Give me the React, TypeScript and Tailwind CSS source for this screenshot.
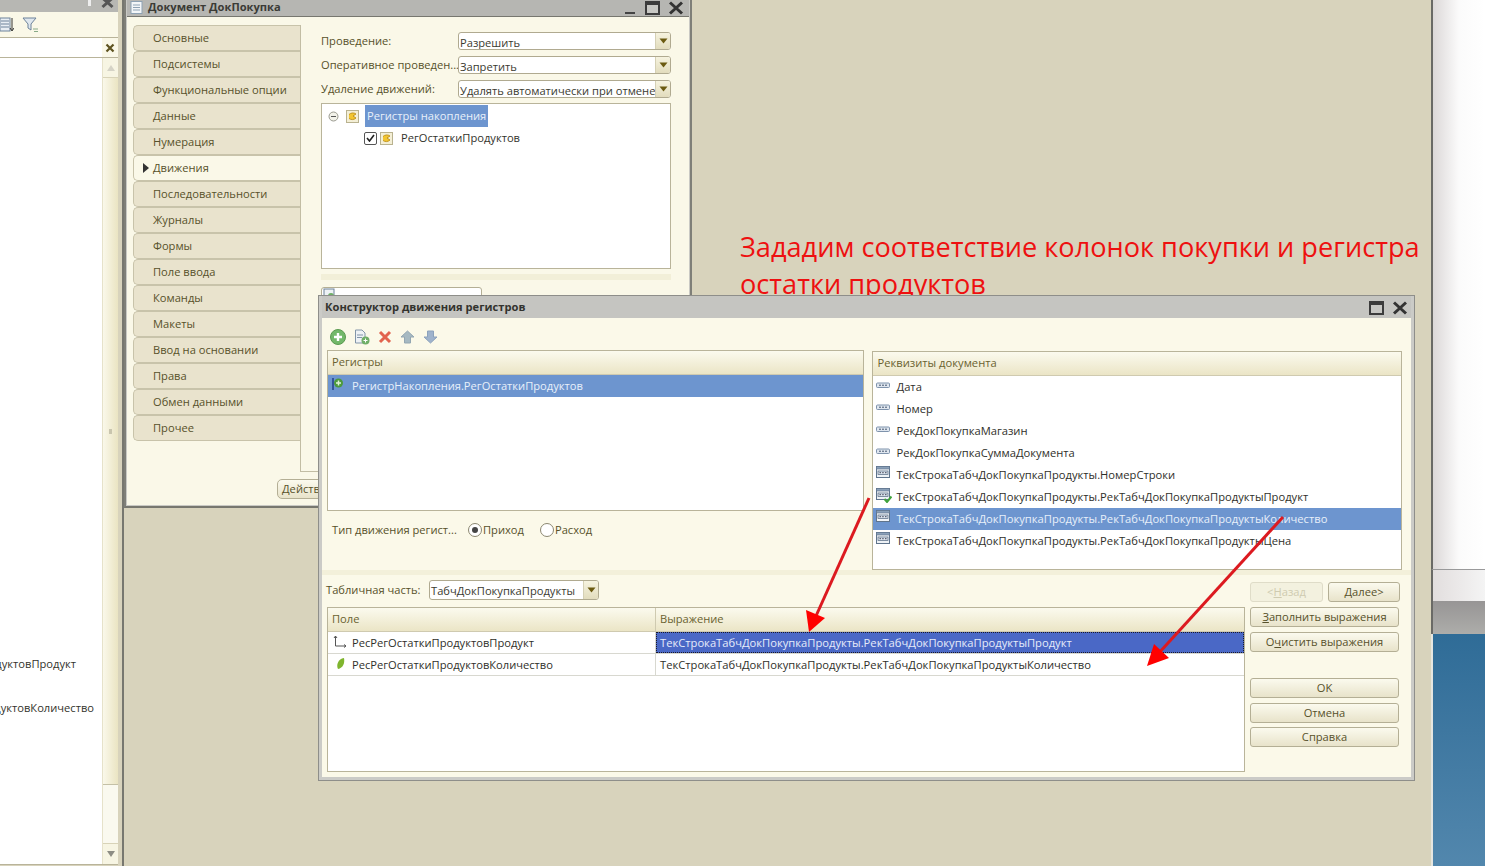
import React from "react";

const font = { fontFamily: '"Open Sans","Noto Sans",sans-serif' };

const Chevron = () => (
  <svg width="9" height="6" viewBox="0 0 9 6"><path d="M0.5 0.5H8.5L4.5 5.5Z" fill="#6b5a10" /></svg>
);

const Sel = ({ text, w, h = "h-[18px]" }: { text: string; w: string; h?: string }) => (
  <div className={`${w} ${h} min-w-0 flex items-stretch rounded-[3px] border border-[#b0aa90] bg-white overflow-hidden`}>
    <div className="flex-1 min-w-0 pl-px pt-[1px] text-[#3a3a30] whitespace-nowrap overflow-hidden leading-[17px]">{text}</div>
    <div className="w-[15px] shrink-0 flex items-center justify-center bg-linear-to-b from-[#f6f3df] to-[#e2dcbd] border-l border-[#d5d0b5]"><Chevron /></div>
  </div>
);

const TabItem = ({ t, active }: { t: string; active?: boolean }) => (
  <div className={`h-[26px] w-[167px] flex items-center rounded-l-[5px] border border-r-0 border-[#c8c3aa] pl-[19px] relative text-[#57512a] ${active ? "bg-[#faf8e8] z-10" : "bg-[#e9e3cd]"}`}>
    {active && <span className="absolute left-[9px] top-[7px] w-0 h-0 border-y-[5px] border-y-transparent border-l-[6px] border-l-[#333]" />}
    {t}
  </div>
);

const RegIcon = () => (
  <svg width="13" height="13" viewBox="0 0 13 13">
    <rect x="0.5" y="0.5" width="12" height="12" fill="#f4efd6" stroke="#b9b28f" />
    <path d="M3 4.5C5 2.5 8 2.5 10 4L7 6L10 8C8 10 5 10 3 8.5" fill="#f2c531" stroke="#b8860b" strokeWidth="0.8" />
  </svg>
);

const FieldIcon = () => (
  <svg width="14" height="8" viewBox="0 0 14 8">
    <rect x="0.5" y="1" width="13" height="4.5" rx="1" fill="#dfe6ef" stroke="#7f93ac" />
    <path d="M3 3.2H5M6 3.2H8M9 3.2H11" stroke="#44566e" strokeWidth="1" />
  </svg>
);

const TableIcon = ({ check, light }: { check?: boolean; light?: boolean }) => (
  <svg width="16" height="15" viewBox="0 0 16 15">
    <rect x="0.5" y="0.5" width="13" height="11" fill={light ? "#f2f5f8" : "#eef2f6"} stroke="#5f748c" />
    <rect x="0.5" y="0.5" width="13" height="2.5" fill="#8aa0b8" stroke="#5f748c" strokeWidth="0.6" />
    <rect x="2" y="5" width="10" height="3.5" fill="#d9e2ec" stroke="#52667e" strokeWidth="0.7" />
    <path d="M3.5 6.7H5M6.2 6.7H7.7M9 6.7H10.5" stroke="#334" strokeWidth="0.9" />
    {check && <path d="M8.5 11L11 14L15.5 8.5" fill="none" stroke="#3fa23c" strokeWidth="2" />}
  </svg>
);

const Row = ({ t, icon, sel }: { t: string; icon: React.ReactNode; sel?: boolean }) => (
  <div className={`h-[22px] flex items-center ${sel ? "bg-[#6d95cf] text-[#e8f0fa]" : "text-[#2f2f2a]"}`}>
    <div className="w-[24px] pl-[3px] flex justify-start shrink-0 pb-[3px]">{icon}</div>
    <span className="whitespace-nowrap">{t}</span>
  </div>
);

const Btn = ({ children, w = "w-[149px]", dis }: { children: React.ReactNode; w?: string; dis?: boolean }) => (
  <div className={`${w} h-[20px] shrink-0 flex items-center justify-center rounded-[3px] border whitespace-nowrap ${dis ? "border-[#dfdcc8] text-[#cfcbb0] bg-[#f3f1df]" : "border-[#b4af95] text-[#57512a] bg-linear-to-b from-[#fbfaee] to-[#e8e3ca]"}`}>
    {children}
  </div>
);

const Head = ({ children, className = "" }: { children: React.ReactNode; className?: string }) => (
  <div className={`h-[24px] flex items-center pl-[4px] pb-px text-[#6a6230] bg-linear-to-b from-[#fbfaee] to-[#ebe5c6] border-b border-[#cfcab0] ${className}`}>{children}</div>
);

const WinBtns = ({ min }: { min?: boolean }) => (
  <div className="flex items-center gap-[8px]">
    {min && <div className="w-[12px] h-[12px] flex items-end"><div className="w-[10px] h-[2px] bg-[#444]" /></div>}
    <svg width="15" height="14" viewBox="0 0 15 14"><rect x="1" y="1" width="13" height="12" fill="#c8c8c4" stroke="#3c3c3c" strokeWidth="2" /><rect x="1" y="1" width="13" height="3" fill="#3c3c3c" /></svg>
    <svg width="16" height="14" viewBox="0 0 16 14"><path d="M2 1.5L14 12.5M14 1.5L2 12.5" stroke="#333" strokeWidth="3" /></svg>
  </div>
);

const Radio = ({ on, t }: { on?: boolean; t: string }) => (
  <div className="flex items-center gap-px text-[#57512a]">
    <div className="w-[14px] h-[14px] rounded-full border border-[#8b8770] bg-white flex items-center justify-center">
      {on && <div className="w-[6px] h-[6px] rounded-full bg-[#444]" />}
    </div>
    {t}
  </div>
);

export default function App() {
  const tabs = ["Основные", "Подсистемы", "Функциональные опции", "Данные", "Нумерация", "Движения", "Последовательности", "Журналы", "Формы", "Поле ввода", "Команды", "Макеты", "Ввод на основании", "Права", "Обмен данными", "Прочее"];
  const attrs = ["Дата", "Номер", "РекДокПокупкаМагазин", "РекДокПокупкаСуммаДокумента"];
  return (
    <div style={font} className="relative w-[1485px] h-[866px] overflow-hidden bg-[#d8d3bc] text-[11.15px]">
      {/* left panel */}
      <div className="absolute left-0 top-0 w-[118px] h-[865px] flex flex-col bg-[#faf8e8]">
        <div className="h-[12px] bg-[#b7b7b3] flex justify-end items-start pr-[4px] gap-[10px] overflow-hidden shrink-0">
          <div className="w-[3px] h-[6px] bg-[#eee]" />
          <svg width="13" height="9" viewBox="0 0 13 9"><path d="M1.5 -2L11.5 7M11.5 -2L1.5 7" stroke="#555" strokeWidth="3" /></svg>
        </div>
        <div className="h-[25px] flex items-center gap-[8px] shrink-0 pt-px">
          <svg width="14" height="18" viewBox="0 0 14 18"><rect x="0" y="2" width="10" height="13" fill="#e8eef4" stroke="#6d829a" /><path d="M1 5H9M1 8H9M1 11H9" stroke="#6d829a" /><path d="M12 2V14M10 12L12 15L14 12" stroke="#333" fill="none" /></svg>
          <svg width="17" height="16" viewBox="0 0 17 16"><path d="M1 1H14L9 7V13L6 11V7Z" fill="#dfe7ee" stroke="#6d829a" /><path d="M11 12H16M12 14.500H16" stroke="#8a8" /></svg>
        </div>
        <div className="h-[21px] flex items-center justify-end border-y border-[#b9b49a] bg-white shrink-0">
          <div className="w-[16px] h-full bg-[#faf8e8] flex items-center justify-center">
            <svg width="10" height="10" viewBox="0 0 10 10"><path d="M1.500 1.500L8.500 8.500M8.500 1.500L1.500 8.500" stroke="#5e5320" strokeWidth="2.200" /></svg>
          </div>
        </div>
        <div className="flex-1 flex min-h-0 border-b border-[#b9b49a]">
          <div className="w-[102px] bg-white pt-[595px] text-[#33332c] overflow-hidden">
            <div className="h-[22px] flex items-center justify-end pr-[26px] whitespace-nowrap">РесРегОстаткиПродуктовПродукт</div>
            <div className="h-[22px] mt-[22px] flex items-center justify-end pr-[8px] whitespace-nowrap">РесРегОстаткиПродуктовКоличество</div>
          </div>
          <div className="w-[16px] flex flex-col border-l border-[#e6e2ca]">
            <div className="h-[20px] flex items-center justify-center bg-[#f7f5e3] border-b border-[#d8d3b8] shrink-0">
              <div className="w-0 h-0 border-x-[4px] border-x-transparent border-b-[6px] border-b-[#d5d3c6]" />
            </div>
            <div className="flex-1 bg-linear-to-r from-[#faf8ea] to-[#eae4c2] flex items-center justify-center text-[#c2bda4] border-b border-[#c4c0a6]">
              <div className="w-[3px] h-[5px] bg-[#c9c5ae]" />
            </div>
            <div className="h-[59px] bg-[#faf9ef] border-b border-[#d8d3b8] shrink-0" />
            <div className="h-[20px] flex items-center justify-center bg-[#f7f5e3] shrink-0">
              <div className="w-0 h-0 border-x-[4px] border-x-transparent border-t-[6px] border-t-[#8d8d84]" />
            </div>
          </div>
        </div>
      </div>
      <div className="absolute left-[122px] top-0 w-[2px] h-[866px] bg-[#77776f]" />

      {/* document window */}
      <div className="absolute left-[124px] top-0 w-[568px] h-[508px] flex flex-col border-x-2 border-b-2 border-x-[#7f7f78] border-b-[#77776f] bg-[#c9c9c4] px-px pb-px">
        <div className="h-[17px] shrink-0 flex items-center justify-between pl-[3px] pr-[5px] bg-[#b6b6b2] border-b border-[#77776f]">
          <div className="flex items-center gap-[5px] pb-px font-bold text-[#3b3b36]">
            <svg width="13" height="13" viewBox="0 0 13 13"><rect x="1" y="0.5" width="11" height="12" fill="#f3f6f8" stroke="#8ea2b4" /><path d="M3 4H10M3 6.500H10M3 9H10" stroke="#8ea2b4" /></svg>
            Документ ДокПокупка
          </div>
          <WinBtns min />
        </div>
        <div className="flex-1 flex bg-[#faf8e8] pt-[8px] pl-[6px] min-h-0 overflow-hidden">
          <div className="w-[167px] flex flex-col shrink-0">
            {tabs.map((t) => <TabItem key={t} t={t} active={t === "Движения"} />)}
            <div className="flex-1 pt-[38px] pl-[144px]">
              <div className="w-[70px] h-[20px] overflow-hidden rounded-[5px] border border-[#b4af95] bg-linear-to-b from-[#fbfaee] to-[#e8e3ca] text-[#57512a] pl-[4px] whitespace-nowrap leading-[18px]">Действия</div>
            </div>
          </div>
          <div className="flex-1 min-w-0 h-[447px] border-l border-b border-[#c2bda4] pl-[20px] pr-[18px] pt-[7px] flex flex-col">
            {[["Проведение:", "Разрешить"], ["Оперативное проведен...", "Запретить"], ["Удаление движений:", "Удалять автоматически при отмене"]].map(([a, b]) => (
              <div key={a} className="h-[18px] mb-[6px] flex items-center text-[#57512a] shrink-0">
                <div className="w-[137px] shrink-0 whitespace-nowrap overflow-hidden">{a}</div>
                <Sel text={b} w="flex-1" />
              </div>
            ))}
            <div className="h-[166px] mt-[-1px] border border-[#b9b49a] bg-white pl-[5px] pt-px shrink-0 text-[#33332c]">
              <div className="h-[22px] flex items-center">
                <svg width="11" height="11" viewBox="0 0 11 11" className="ml-px"><circle cx="5.500" cy="5.500" r="4.500" fill="#f2f2ea" stroke="#9a9a90" /><path d="M3 5.500H8" stroke="#555" /></svg>
                <div className="ml-[7px]"><RegIcon /></div>
                <div className="ml-[6px] h-[22px] px-[2px] bg-[#6d95cf] text-[#e8f0fa] flex items-center">Регистры накопления</div>
              </div>
              <div className="h-[22px] flex items-center pl-[37px]">
                <div className="w-[13px] h-[13px] border border-[#555] rounded-[2px] bg-white flex items-center justify-center">
                  <svg width="9" height="8" viewBox="0 0 9 8"><path d="M1 4L3.500 7L8 1" fill="none" stroke="#222" strokeWidth="1.600" /></svg>
                </div>
                <div className="ml-[3px]"><RegIcon /></div>
                <span className="ml-[8px]">РегОстаткиПродуктов</span>
              </div>
            </div>
            <div className="h-[6px] mt-[5px] bg-[#f2efd8] shrink-0" />
            <div className="mt-[7px] w-[161px] h-[20px] border border-[#b4af95] rounded-[3px] bg-white shrink-0 pl-px">
              <svg width="13" height="13" viewBox="0 0 13 13"><rect x="1" y="1" width="10" height="11" fill="#eef2f5" stroke="#6d829a" /><circle cx="8" cy="8" r="3" fill="#6fae68" /></svg>
            </div>
          </div>
        </div>
      </div>

      {/* desktop right */}
      <div className="absolute left-[1431px] top-0 w-[54px] h-[866px] flex flex-col">
        <div className="h-[570px] bg-linear-to-r from-[#dcd8d8] via-[#fbfbfb] to-white border-l-2 border-l-[#6a6a66] border-b border-b-[#99999a]" />
        <div className="h-[31px] bg-linear-to-r from-[#e2dede] to-[#f4f4f4] border-l-2 border-l-[#6a6a66]" />
        <div className="h-[33px] bg-linear-to-b from-[#979595] to-[#adadaa] border-l-2 border-l-[#6a6a66]" />
        <div className="flex-1 bg-linear-to-b from-[#2f6c97] to-[#5287ad] border-l-2 border-l-[#e6e6e0]" />
      </div>

      {/* note */}
      <div className="absolute left-[740px] top-[228px] w-[690px] text-[27.15px] leading-[37px] text-[#ee1010]">
        Зададим соответствие колонок покупки и регистра остатки продуктов
      </div>

      {/* dialog */}
      <div className="absolute left-[318px] top-[295px] w-[1097px] h-[486px] flex flex-col border border-[#8e8e8a] bg-[#cbcbc7] px-[3px] pb-[3px]">
        <div className="h-[22px] shrink-0 flex items-center justify-between pl-[3px] pr-[3px] pt-px font-bold text-[#33332e] bg-[#c5c5c1]">
          Конструктор движения регистров
          <WinBtns />
        </div>
        <div className="flex-1 min-h-0 bg-[#fbf9e9] flex flex-col pl-[5px] pr-[9px]">
          <div className="h-[32px] flex items-center gap-[8px] pl-[3px] pt-[6px] shrink-0">
            <svg width="16" height="16" viewBox="0 0 16 16"><circle cx="8" cy="8" r="7.500" fill="#73b86a" stroke="#5a9a50" /><path d="M8 4V12M4 8H12" stroke="#fff" strokeWidth="2.400" /></svg>
            <svg width="16" height="16" viewBox="0 0 16 16"><path d="M1.500 1H8L11 4V14H1.500Z" fill="#eef2f5" stroke="#8295a8" /><path d="M3 6H9M3 8.500H8" stroke="#8295a8" /><circle cx="11.500" cy="11.500" r="4" fill="#6fae68" /><path d="M11.500 9.500V13.500M9.500 11.500H13.500" stroke="#fff" /></svg>
            <svg width="14" height="14" viewBox="0 0 14 14"><path d="M2 2L12 12M12 2L2 12" stroke="#e2644f" strokeWidth="3" /></svg>
            <svg width="15" height="14" viewBox="0 0 15 14"><path d="M7.500 1L14 7H10.500V13H4.500V7H1Z" fill="#a6b9c2" stroke="#93a6b2" /></svg>
            <svg width="15" height="14" viewBox="0 0 15 14"><path d="M7.500 13L14 7H10.500V1H4.500V7H1Z" fill="#9fb3cc" stroke="#8ca2bc" /></svg>
          </div>
          <div className="h-[220px] flex gap-[8px] shrink-0">
            <div className="w-[537px] flex flex-col">
              <div className="h-[161px] border border-[#b9b49a] bg-white flex flex-col shrink-0">
                <Head>Регистры</Head>
                <Row sel t="РегистрНакопления.РегОстаткиПродуктов" icon={
                  <svg width="14" height="15" viewBox="0 0 14 15"><path d="M2 1V13" stroke="#20408a" strokeWidth="1.500" /><circle cx="7.500" cy="6" r="4.500" fill="#4c9a3c" /><path d="M7.500 3.500V8.500M5 6H10" stroke="#dff3d8" strokeWidth="1.500" /></svg>
                } />
              </div>
              <div className="h-[40px] flex items-center pl-[5px] pb-[1px] text-[#57512a]">
                <div className="w-[136px] whitespace-nowrap">Тип движения регист...</div>
                <Radio on t="Приход" />
                <div className="w-[16px]" />
                <Radio t="Расход" />
              </div>
            </div>
            <div className="w-[531px] mt-px border border-[#b9b49a] bg-white flex flex-col text-[11.2px]">
              <Head className="pl-[5px]">Реквизиты документа</Head>
              {attrs.map((a) => <Row key={a} t={a} icon={<FieldIcon />} />)}
              <Row t="ТекСтрокаТабчДокПокупкаПродукты.НомерСтроки" icon={<TableIcon />} />
              <Row t="ТекСтрокаТабчДокПокупкаПродукты.РекТабчДокПокупкаПродуктыПродукт" icon={<TableIcon check />} />
              <Row sel t="ТекСтрокаТабчДокПокупкаПродукты.РекТабчДокПокупкаПродуктыКоличество" icon={<TableIcon light />} />
              <Row t="ТекСтрокаТабчДокПокупкаПродукты.РекТабчДокПокупкаПродуктыЦена" icon={<TableIcon />} />
            </div>
          </div>
          <div className="h-[5px] bg-[#f3f0da] shrink-0 -ml-[5px] -mr-[9px]" />
          <div className="flex-1 flex gap-[5px] min-h-0">
            <div className="w-[918px] flex flex-col">
              <div className="h-[32px] flex items-center pb-[2px] shrink-0 text-[#57512a] -ml-[1px]">
                <div className="w-[103px] whitespace-nowrap pt-px">Табличная часть:</div>
                <Sel text="ТабчДокПокупкаПродукты" w="w-[170px]" h="h-[20px]" />
              </div>
              <div className="h-[165px] border border-[#b9b49a] bg-white flex flex-col shrink-0 text-[#2f2f2a]">
                <div className="flex shrink-0">
                  <Head className="w-[328px] border-r">Поле</Head>
                  <Head className="flex-1">Выражение</Head>
                </div>
                <div className="h-[22px] flex border-b border-[#d8d8d0] shrink-0">
                  <div className="w-[328px] flex items-center border-r border-[#d8d8d0] pl-[24px] pt-px relative">
                    <svg width="14" height="14" viewBox="0 0 14 14" className="absolute left-[5px] top-[3px]"><path d="M2.500 1V11H13" fill="none" stroke="#555" /><path d="M1 3L2.500 1L4 3M11 9.500L13 11L11 12.500" fill="none" stroke="#555" /></svg>
                    РесРегОстаткиПродуктовПродукт
                  </div>
                  <div className="flex-1 flex items-center bg-[#4a68c6] text-[#e6ecfa] pl-[3px] pt-px border border-dotted border-[#1a1a2a] text-[11.2px]">ТекСтрокаТабчДокПокупкаПродукты.РекТабчДокПокупкаПродуктыПродукт</div>
                </div>
                <div className="h-[22px] flex border-b border-[#d8d8d0] shrink-0">
                  <div className="w-[328px] flex items-center border-r border-[#d8d8d0] pl-[24px] pt-px relative">
                    <svg width="9" height="13" viewBox="0 0 9 13" className="absolute left-[8px] top-[3px]"><path d="M2 12C0 8 2 2 8 1C9 6 7 11 2 12Z" fill="#7fb52e" /></svg>
                    РесРегОстаткиПродуктовКоличество
                  </div>
                  <div className="flex-1 flex items-center pl-[4px] pt-px text-[11.2px]">ТекСтрокаТабчДокПокупкаПродукты.РекТабчДокПокупкаПродуктыКоличество</div>
                </div>
              </div>
            </div>
            <div className="flex flex-col pt-[7px] shrink-0 w-[150px]">
              <div className="flex gap-[5px]">
                <Btn w="w-[73px]" dis><span>&lt;<u>Н</u>азад</span></Btn>
                <Btn w="w-[72px]"><span><u>Д</u>алее&gt;</span></Btn>
              </div>
              <div className="mt-[5px]"><Btn><span><u>З</u>аполнить выражения</span></Btn></div>
              <div className="mt-[5px]"><Btn><span>О<u>ч</u>истить выражения</span></Btn></div>
              <div className="mt-[26px]"><Btn>OK</Btn></div>
              <div className="mt-[5px]"><Btn>Отмена</Btn></div>
              <div className="mt-[4px]"><Btn>Справка</Btn></div>
            </div>
          </div>
        </div>
      </div>

      {/* annotation arrows */}
      <svg className="absolute left-0 top-0 pointer-events-none" width="1485" height="866" viewBox="0 0 1485 866">
        <path d="M869 498L816 616" stroke="#dc1a20" strokeWidth="3" fill="none" />
        <path d="M809 632L806 610L825 618Z" fill="#f00" />
        <path d="M1283 517L1158 654" stroke="#dc1a20" strokeWidth="3" fill="none" />
        <path d="M1147 666L1154 644L1169 658Z" fill="#f00" />
      </svg>
    </div>
  );
}
